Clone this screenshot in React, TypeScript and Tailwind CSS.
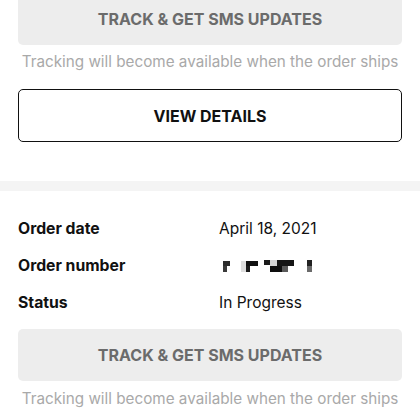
import React from 'react';

const font = { fontFamily: 'Inter, "Liberation Sans", Arial, sans-serif' };

function TrackButton() {
    return (
        <div className="h-[52px] rounded-[5px] bg-[#ededed] flex items-center justify-center">
            <span className="text-[16px] font-bold text-[#6b6b6b]">TRACK &amp; GET SMS UPDATES</span>
        </div>
    );
}

function Caption({ className }: { className?: string }) {
    return (
        <p className={`text-[15.25px] leading-[20px] text-[#a9a9a9] text-center ${className ?? ''}`}>
            Tracking will become available when the order ships
        </p>
    );
}

// pixelated (censored) order number
const blocks: [number, number, number, number, string][] = [
    [223, 257, 7, 5, '#2b2b2b'],
    [223, 262, 4, 6, '#3a3a3a'],
    [241, 257, 5, 11, '#dedede'],
    [246, 257, 12, 5, '#111111'],
    [246, 262, 4, 6, '#1c1c1c'],
    [264, 256, 6, 5, '#1a1a1a'],
    [270, 256, 7, 6, '#d4d4d4'],
    [277, 256, 17, 6, '#151515'],
    [270, 262, 12, 6, '#0e0e0e'],
    [282, 262, 6, 6, '#5a5a5a'],
    [307, 256, 5, 6, '#222222'],
    [307, 262, 5, 6, '#6a6a6a'],
];

function Redacted() {
    return (
        <svg width="100" height="14" viewBox="219 255 100 14" className="block">
            {blocks.map(([x, y, w, h, c], i) => (
                <rect key={i} x={x} y={y} width={w} height={h} fill={c} />
            ))}
        </svg>
    );
}

function Row({ label, children }: { label: string; children: React.ReactNode }) {
    return (
        <div className="h-[37px] flex items-center">
            <span className="w-[201px] text-[15.75px] font-bold text-[#111]">{label}</span>
            <span className="text-[15.5px] text-[#111]">{children}</span>
        </div>
    );
}

export default function App() {
    return (
        <div className="w-[420px] h-[420px] overflow-hidden bg-white" style={font}>
            <div className="px-[18px] -mt-[7px]">
                <TrackButton />
                <Caption className="mt-[7px]" />
                <div className="mt-[17px] h-[53px] rounded-[5px] border border-[#111] flex items-center justify-center">
                    <span className="text-[16px] font-bold text-[#111]">VIEW DETAILS</span>
                </div>
            </div>
            <div className="mt-[39px] h-[10px] bg-[#f4f4f4]" />
            <div className="px-[18px] pt-[19px]">
                <Row label="Order date">April 18, 2021</Row>
                <Row label="Order number"><Redacted /></Row>
                <Row label="Status">In Progress</Row>
                <div className="mt-[8px]">
                    <TrackButton />
                </div>
                <Caption className="mt-[8px]" />
            </div>
        </div>
    );
}
